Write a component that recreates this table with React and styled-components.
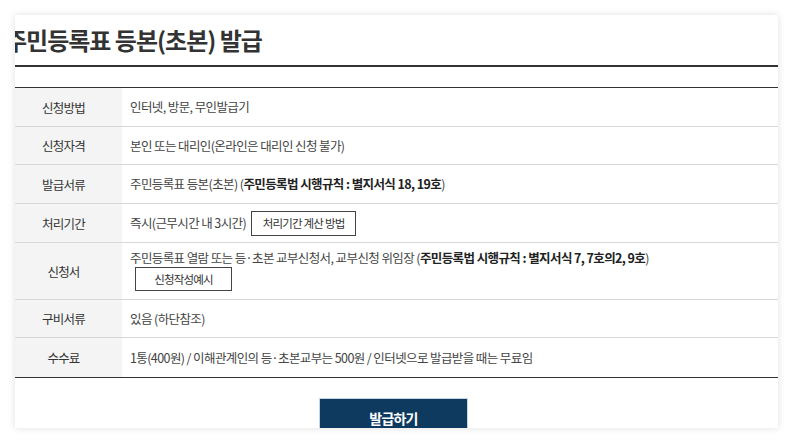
import React from "react";
import styled, { createGlobalStyle } from "styled-components";

const Global = createGlobalStyle`
  html, body { margin: 0; padding: 0; background: #fff; }
  body { font-family: "Noto Sans CJK KR", "Noto Sans", sans-serif; color: #333; }
  * { box-sizing: border-box; }
`;

const Page = styled.div`
  padding: 15px 15px 0 15px;
  width: 793px;
  height: 443px;
`;

const Card = styled.div`
  width: 763px;
  height: 413px;
  background: #fff;
  overflow: hidden;
  box-shadow: 0 0 7px rgba(0, 0, 0, 0.13);
`;

const Header = styled.div`
  height: 52px;
  display: flex;
  align-items: center;
  border-bottom: 2px solid #333;
  overflow: hidden;
`;

const Title = styled.h1`
  margin: 0 0 0 -10px;
  font-size: 24px;
  font-weight: 700;
  letter-spacing: -1px;
  line-height: 32px;
  color: #333;
  white-space: nowrap;
`;

const Table = styled.div`
  margin-top: 20px;
  border-top: 1px solid #333;
  border-bottom: 1px solid #333;
`;

const Row = styled.div`
  display: grid;
  grid-template-columns: 107px 1fr;
  height: ${(p) => p.$h || 38}px;
  border-top: ${(p) => (p.$first ? "none" : "1px solid #d8d8d8")};
`;

const Label = styled.div`
  background: #f4f4f4;
  display: flex;
  align-items: center;
  justify-content: center;
  padding-right: 10px;
  font-size: 12.5px;
  letter-spacing: -0.8px;
  color: #333;
`;

const Content = styled.div`
  display: flex;
  flex-direction: ${(p) => (p.$col ? "column" : "row")};
  align-items: ${(p) => (p.$col ? "flex-start" : "center")};
  justify-content: flex-start;
  padding: ${(p) => (p.$col ? "6px 8px 0 8px" : "0 8px")};
  font-size: 12.5px;
  letter-spacing: -0.6px;
  color: #444;
  line-height: 18px;
  white-space: nowrap;
`;

const Strong = styled.b`
  font-weight: 700;
  color: #222;
`;

const SmallButton = styled.button`
  height: ${(p) => p.$hgt || 25}px;
  padding: 0;
  margin-left: ${(p) => p.$ml || 0}px;
  background: #fff;
  border: 1px solid #444;
  font-family: inherit;
  font-size: 11.5px;
  letter-spacing: -0.8px;
  color: #333;
  white-space: nowrap;
  cursor: pointer;
  width: ${(p) => p.$w}px;
`;

const Footer = styled.div`
  display: flex;
  justify-content: center;
  padding-top: 20px;
  padding-right: 6px;
`;

const IssueButton = styled.button`
  width: 149px;
  height: 40px;
  background: #0f3a5f;
  border: 1px solid #c3d5e6;
  color: #fff;
  font-family: inherit;
  font-size: 14px;
  font-weight: 700;
  letter-spacing: -0.8px;
  cursor: pointer;
`;

export default function App() {
  return (
    <>
      <Global />
      <Page>
        <Card>
          <Header>
            <Title>주민등록표 등본(초본) 발급</Title>
          </Header>
          <Table>
            <Row $first $h={38}>
              <Label>신청방법</Label>
              <Content>인터넷, 방문, 무인발급기</Content>
            </Row>
            <Row $h={38}>
              <Label>신청자격</Label>
              <Content>본인 또는 대리인(온라인은 대리인 신청 불가)</Content>
            </Row>
            <Row $h={39}>
              <Label>발급서류</Label>
              <Content>
                주민등록표 등본(초본)&nbsp;(<Strong>주민등록법 시행규칙 : 별지서식 18, 19호</Strong>)
              </Content>
            </Row>
            <Row $h={39}>
              <Label>처리기간</Label>
              <Content>
                즉시(근무시간 내 3시간)
                <SmallButton $ml={5} $w={105}>처리기간 계산 방법</SmallButton>
              </Content>
            </Row>
            <Row $h={57}>
              <Label>신청서</Label>
              <Content $col>
                <span>
                  주민등록표 열람 또는 등·초본 교부신청서, 교부신청 위임장&nbsp;(
                  <Strong>주민등록법 시행규칙 : 별지서식 7, 7호의2, 9호</Strong>)
                </span>
                <SmallButton $ml={5} $w={97} $hgt={24}>신청작성예시</SmallButton>
              </Content>
            </Row>
            <Row $h={38}>
              <Label>구비서류</Label>
              <Content>있음 (하단참조)</Content>
            </Row>
            <Row $h={40}>
              <Label>수수료</Label>
              <Content>
                1통(400원) / 이해관계인의 등·초본교부는 500원 / 인터넷으로 발급받을 때는 무료임
              </Content>
            </Row>
          </Table>
          <Footer>
            <IssueButton>발급하기</IssueButton>
          </Footer>
        </Card>
      </Page>
    </>
  );
}
